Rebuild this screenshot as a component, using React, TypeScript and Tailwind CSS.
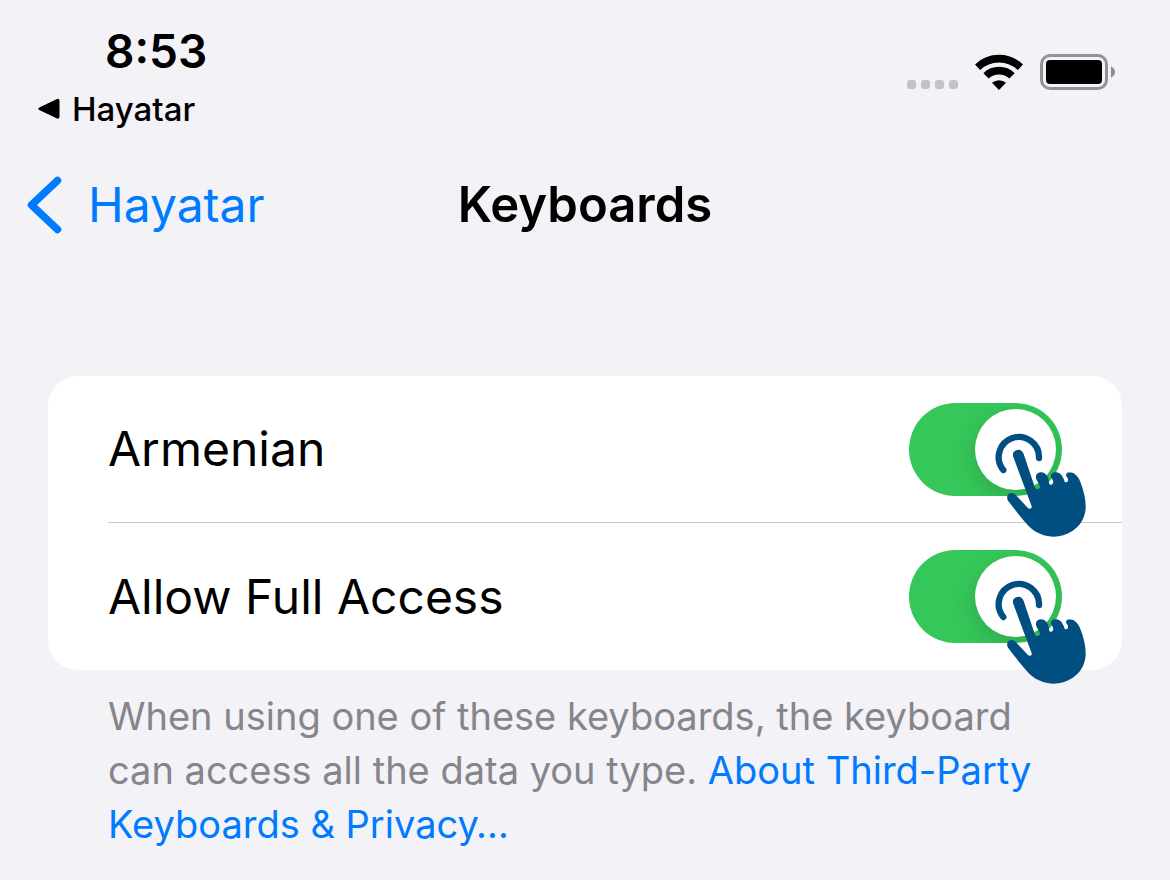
import { useState } from "react";

function WifiIcon() {
  return (
    <svg viewBox="0 0 48 36" className="h-9 w-12" aria-hidden="true">
      <g fill="none" stroke="#000" strokeWidth="7.6">
        <path d="M2.6 13.2A31 31 0 0 1 45.4 13.2" />
        <path d="M11 21.9A18.6 18.6 0 0 1 37 21.9" />
      </g>
      <path d="M24 36L17 28.800A10.500 10.500 0 0 1 31 28.800Z" />
    </svg>
  );
}

function BatteryIcon() {
  return (
    <svg viewBox="0 0 75 36" className="h-9 w-[75px]" aria-hidden="true">
      <rect x="1.5" y="1.5" width="65" height="33" rx="8.5" fill="none" stroke="#939296" strokeWidth="3" />
      <rect x="6" y="6" width="56" height="24" rx="4" />
      <path d="M71 12.5C73.5 13.5 75 15.6 75 18S73.5 22.5 71 23.5Z" fill="#8a898d" />
    </svg>
  );
}

function TapHand() {
  return (
    <svg
      viewBox="45 21 276 318"
      className="pointer-events-none absolute left-[86px] top-[29px] h-[106px] w-[92px]"
      aria-hidden="true"
    >
      <path
        d="M70 135A60.5 60.5 0 1 1 177 99"
        fill="none"
        stroke="#004f80"
        strokeWidth="19"
        strokeLinecap="round"
      />
      <path
        d="M100 96C95 83 105 74 115 74C123 74 128 79 131 87L165 188C168 195 180 193 180 185C178 173 166 166 168 153C170 144 178 142 184 142C195 143 201 150 205 160C208 171 205 176 211 179C216 181 220 175 220 170C219 162 211 159 213 150C215 143 223 142 229 142C240 143 246 151 250 160C254 167 252 172 258 172C264 171 266 165 263 159C258 154 256 148 261 144C265 142 277 142 283 146C292 151 299 163 302 173C311 197 318 223 317 250C315 285 293 317 250 331C218 340 181 334 153 310C133 291 102 250 84 227C78 216 83 205 93 204C99 203 104 206 108 211L143 248C149 254 157 250 155 244Z"
        fill="#004f80"
      />
    </svg>
  );
}

function ToggleRow({ id, label, divided }: { id: string; label: string; divided?: boolean }) {
  const [on, setOn] = useState(true);
  return (
    <div
      className={
        divided
          ? "flex h-[147px] items-center justify-between border-b border-[#c6c6c8] pr-[60px]"
          : "flex h-[147px] items-center justify-between pr-[60px]"
      }
    >
      <label htmlFor={id} className="text-[48px] leading-[60px]">
        {label}
      </label>
      <div className="relative h-[93px] w-[153px]">
        <input
          id={id}
          type="checkbox"
          role="switch"
          checked={on}
          onChange={(e) => setOn(e.target.checked)}
          className="flex h-[93px] w-[153px] cursor-pointer appearance-none items-center overflow-hidden rounded-full bg-[#e9e9ea] px-[6px] before:block before:size-[81px] before:rounded-full before:bg-white before:shadow-[0_8px_24px_rgba(0,0,0,0.15)] before:content-[''] checked:justify-end checked:bg-[#35c759]"
        />
        <TapHand />
      </div>
    </div>
  );
}

export default function App() {
  return (
    <div className="min-h-screen bg-[#f2f2f7] font-['Inter',sans-serif] text-black">
      <header>
        <div className="flex items-start justify-between pl-[38px] pr-[55px] pt-[22px]">
          <div>
            <div className="pl-[67px] text-[46px] font-semibold leading-[58px]">8:53</div>
            <a href="#hayatar" className="mt-[9px] flex items-center gap-3 text-[33px] font-medium leading-10">
              <svg viewBox="0 0 22 22" className="size-[22px]" aria-hidden="true">
                <path d="M1.3 9.4L18.5 1.2Q21.5 0 21.5 3V18.5Q21.5 21.5 18.5 20.3L1.3 12Q-.8 10.7 1.3 9.4Z" />
              </svg>
              Hayatar
            </a>
          </div>
          <div className="flex pt-8">
            <div className="mr-[17px] flex gap-[5px] pt-[26px]">
              <span className="size-[9px] rounded-[3px] bg-[#c3c2c7]" />
              <span className="size-[9px] rounded-[3px] bg-[#c3c2c7]" />
              <span className="size-[9px] rounded-[3px] bg-[#c3c2c7]" />
              <span className="size-[9px] rounded-[3px] bg-[#c3c2c7]" />
            </div>
            <div className="mr-[17px]">
              <WifiIcon />
            </div>
            <BatteryIcon />
          </div>
        </div>
        <nav className="grid grid-cols-[1fr_auto_1fr] items-center px-[27px] pt-[46px]">
          <button type="button" className="flex items-center gap-[26px] text-[48px] leading-[60px] text-[#007aff]">
            <svg viewBox="0 0 35 58" className="h-[58px] w-[35px]" aria-hidden="true">
              <path
                d="M30.5 4.5L4.5 29L30.5 53.5"
                fill="none"
                stroke="#007aff"
                strokeWidth="7.5"
                strokeLinecap="round"
                strokeLinejoin="round"
              />
            </svg>
            Hayatar
          </button>
          <h1 className="text-[49px] font-semibold leading-[60px]">Keyboards</h1>
        </nav>
      </header>
      <main className="px-12 pt-[141px]">
        <section className="rounded-[30px] bg-white pl-[60px]">
          <ToggleRow id="armenian" label="Armenian" divided />
          <ToggleRow id="full-access" label="Allow Full Access" />
        </section>
        <p className="px-[60px] pt-[19px] text-[38px] leading-[54px] text-[#85858b]">
          When using one of these keyboards, the keyboard can access all the data you type.{" "}
          <a href="#privacy" className="text-[#007aff]">
            About Third-Party Keyboards &amp; Privacy…
          </a>
        </p>
      </main>
    </div>
  );
}
